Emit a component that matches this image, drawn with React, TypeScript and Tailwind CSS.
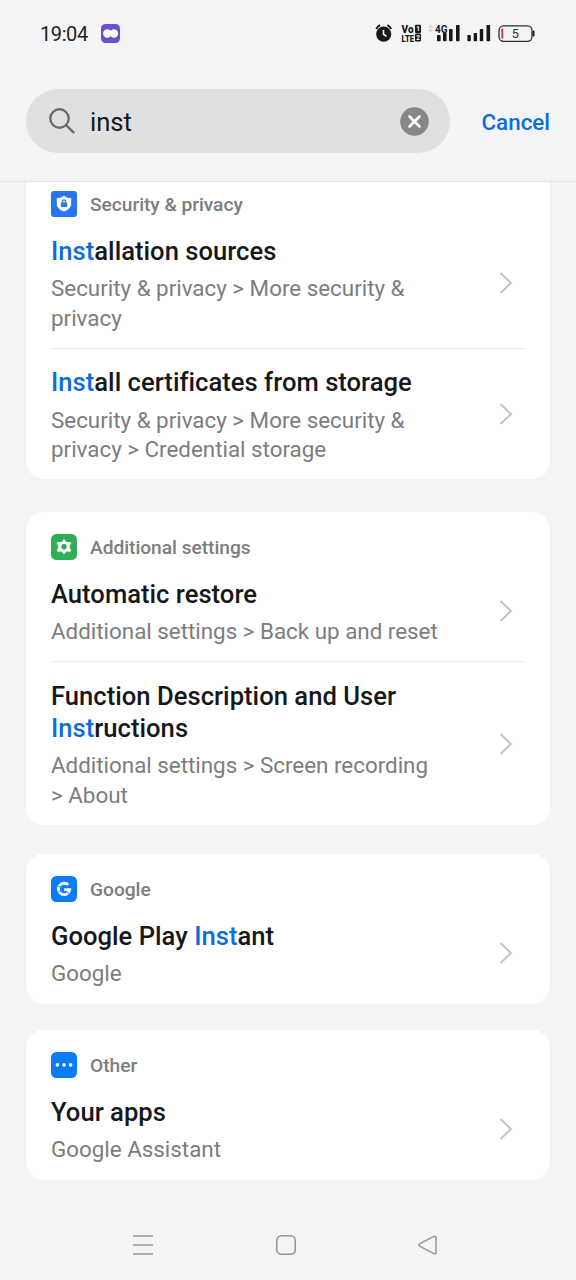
import type { ReactNode } from "react"

type Result = {
  title: ReactNode
  path: ReactNode
}

function Hit({ children }: { children: ReactNode }) {
  return <span className="text-[#0d6ddb]">{children}</span>
}

function ShieldIcon() {
  return (
    <svg viewBox="0 0 26 26" className="size-[26px] shrink-0">
      <rect width="26" height="26" rx="3" fill="#2a75f0" />
      <path d="M13 4.800c2.200 1.500 4.500 2.200 7.200 2.400v5.200c0 4-3.200 6.600-7.200 8-4-1.400-7.200-4-7.200-8V7.200C8.500 7 10.800 6.300 13 4.800z" fill="#fff" />
      <rect x="9.900" y="11.500" width="6.200" height="4.600" rx=".8" fill="#2a75f0" />
      <path d="M11.400 12v-1.600a1.600 1.600 0 0 1 3.200 0V12" fill="none" stroke="#2a75f0" strokeWidth="1.300" />
    </svg>
  )
}

function GearIcon() {
  return (
    <svg viewBox="0 0 26 26" className="size-[26px] shrink-0">
      <rect width="26" height="26" rx="5.500" fill="#2fae55" />
      <path
        d="M13 5.600l2.300 3 3.900-.2c.4 0 .5.300.4.600L18.100 12.800l1.500 3.800c.1.300 0 .6-.4.600l-3.900-.2-2.300 3-2.300-3-3.900.2c-.4 0-.5-.3-.4-.6l1.500-3.800L6.400 9c-.1-.3 0-.6.400-.6l3.900.2z"
        fill="#fff"
        stroke="#fff"
        strokeWidth="1"
        strokeLinejoin="round"
      />
      <circle cx="13" cy="12.800" r="2.700" fill="#2fae55" />
    </svg>
  )
}

function GoogleIcon() {
  return (
    <svg viewBox="0 0 26 26" className="size-[26px] shrink-0">
      <rect width="26" height="26" rx="5.500" fill="#0a7bfa" />
      <path d="M17.200 9A5.700 5.700 0 1 0 18.700 13.600H13.200" fill="none" stroke="#fff" strokeWidth="2.900" />
      <path d="M6.200 9l3 2M6.200 17l3-2M15.800 16l2.600 2" stroke="#0a7bfa" strokeWidth=".8" />
    </svg>
  )
}

function DotsIcon() {
  return (
    <svg viewBox="0 0 26 26" className="size-[26px] shrink-0">
      <rect width="26" height="26" rx="5.500" fill="#0a7bfa" />
      <g fill="#fff">
        <circle cx="6.400" cy="12.900" r="1.800" />
        <circle cx="13" cy="12.900" r="1.800" />
        <circle cx="19.600" cy="12.900" r="1.800" />
      </g>
    </svg>
  )
}

function StatusBar() {
  return (
    <div className="flex h-[68px] items-center pl-10 pr-[40px]">
      <span className="w-[61px] text-[20px] tracking-[-0.400px] text-[#1f2123]">19:04</span>
      <svg viewBox="0 0 19 19" className="mb-px size-[19px]">
        <rect width="19" height="19" rx="4.500" fill="#6b4fd0" />
        <circle cx="6.300" cy="9.500" r="4.200" fill="#fff" />
        <circle cx="12.900" cy="9.500" r="4.200" fill="#fff" />
      </svg>
      <svg viewBox="0 0 162 24" className="ml-auto h-6 w-[162px]" fontFamily="Roboto, sans-serif">
        <g fill="#16181a">
          <circle cx="9.700" cy="12.100" r="7.600" />
          <path d="M2.200 7A9 9 0 0 1 6 3.100M13.400 3.100A9 9 0 0 1 17.200 7" fill="none" stroke="#16181a" strokeWidth="1.800" />
          <path d="M9.500 8.100v4.300l3 1.800" fill="none" stroke="#fff" strokeWidth="1.600" />
          <text x="27.500" y="10.500" fontSize="10" fontWeight="900" textLength="12" lengthAdjust="spacingAndGlyphs">Vo</text>
          <text x="27.500" y="19.500" fontSize="9.500" fontWeight="900" textLength="12.500" lengthAdjust="spacingAndGlyphs">LTE</text>
          <rect x="41" y="2.700" width="6" height="8.300" rx="1" />
          <rect x="41" y="11.600" width="6" height="8" rx="1" />
          <text x="61" y="10.500" fontSize="11.500" fontWeight="700" textLength="12.500" lengthAdjust="spacingAndGlyphs">4G</text>
          <rect x="63" y="13" width="3.600" height="6.200" rx=".8" />
          <rect x="69" y="11" width="3.600" height="8.200" rx=".8" />
          <rect x="75" y="7" width="3.600" height="12.200" rx=".8" />
          <rect x="82" y="3" width="3.600" height="16.200" rx=".8" />
          <rect x="93.400" y="13" width="3.400" height="6.200" rx=".8" />
          <rect x="99.700" y="11" width="3.400" height="8.200" rx=".8" />
          <rect x="105.800" y="7" width="3.400" height="12.200" rx=".8" />
          <rect x="112.500" y="3" width="3.600" height="16.200" rx=".8" />
          <rect x="158.500" y="8.500" width="2" height="6" rx="1" />
        </g>
        <text x="42.300" y="9.300" fontSize="6.500" fontWeight="700" fill="#fff">1</text>
        <text x="42.200" y="18.100" fontSize="6.500" fontWeight="700" fill="#fff">2</text>
        <path d="M54 5.500l2.500-3 2.500 3zM54 7.500l2.500 3 2.500-3z" fill="#cfd1d3" />
        <rect x="125" y="3.900" width="33" height="15.400" rx="4.500" fill="none" stroke="#2b2d2f" strokeWidth="1.300" />
        <rect x="127.300" y="6.300" width="2" height="10.500" rx=".8" fill="#d9434b" />
        <text x="141.300" y="16" fontSize="12.500" textAnchor="middle" fill="#2b2d2f">5</text>
      </svg>
    </div>
  )
}

function SearchBar() {
  return (
    <div className="flex items-center pl-[26px] pt-[21px]">
      <div className="flex h-16 w-[424px] items-center rounded-full bg-[#dfe0e2] pl-[23px] pr-[21px]">
        <svg viewBox="0 0 26 26" className="size-[26px]" fill="none" stroke="#6a6b6d" strokeWidth="2.400" strokeLinecap="round">
          <circle cx="10.500" cy="10.500" r="9.200" />
          <path d="M17.300 17.300l7.200 7" />
        </svg>
        <span className="ml-[15px] flex-1 pt-0.5 text-[25.600px] text-[#17181a]">inst</span>
        <svg viewBox="0 0 29 29" className="size-[29px]">
          <circle cx="14.500" cy="14.500" r="14.300" fill="#858688" />
          <path d="M9.500 9.500l10 10M19.500 9.500l-10 10" stroke="#fff" strokeWidth="2.600" strokeLinecap="round" />
        </svg>
      </div>
      <span className="ml-[31.500px] pt-[3px] text-[22.400px] font-medium text-[#0d6ddb]">Cancel</span>
    </div>
  )
}

function ResultRow({ title, path }: Result) {
  return (
    <div className="flex items-center justify-between pt-[17.400px] pb-[14.600px]">
      <div>
        <div className="text-[25.600px] leading-8 font-medium tracking-[0.020px] whitespace-nowrap text-[#17181a]">{title}</div>
        <div className="mt-[7.500px] text-[22.400px] leading-[29.500px] tracking-[-0.010px] whitespace-nowrap text-[#7c7d7e]">{path}</div>
      </div>
      <svg viewBox="0 0 14 24" className="mt-[-18px] mr-[12.500px] mb-[-15px] h-6 w-3.5 shrink-0" fill="none" stroke="#c4c4c5" strokeWidth="2">
        <path d="M1.500 2l10.500 10-10.500 10" />
      </svg>
    </div>
  )
}

function ResultCard({ icon, name, rows, className }: { icon: ReactNode; name: string; rows: Result[]; className: string }) {
  return (
    <section className={`mx-[26px] bg-white px-[25px] ${className}`}>
      <div className="flex h-[26.500px] items-start gap-[13px]">
        {icon}
        <span className="pt-[2.400px] text-[19.200px] leading-6 font-medium tracking-[-0.040px] text-[#7c7d7e]">{name}</span>
      </div>
      <div className="divide-y divide-[#ededee]">
        {rows.map((row, index) => (
          <ResultRow key={index} {...row} />
        ))}
      </div>
    </section>
  )
}

export default function App() {
  const security: Result[] = [
    {
      title: <><Hit>Inst</Hit>allation sources</>,
      path: <>Security &amp; privacy &gt; More security &amp;<br />privacy</>,
    },
    {
      title: <><Hit>Inst</Hit>all certificates from storage</>,
      path: <>Security &amp; privacy &gt; More security &amp;<br />privacy &gt; Credential storage</>,
    },
  ]

  const additional: Result[] = [
    { title: "Automatic restore", path: "Additional settings > Back up and reset" },
    {
      title: <>Function Description and User<br /><Hit>Inst</Hit>ructions</>,
      path: <>Additional settings &gt; Screen recording<br />&gt; About</>,
    },
  ]

  return (
    <div className="flex h-[1280px] w-[576px] flex-col overflow-hidden bg-[#f3f4f6] font-['Roboto',sans-serif]">
      <header className="h-[182px] shrink-0 border-b border-[#e6e7e9]">
        <StatusBar />
        <SearchBar />
      </header>

      <main className="flex-1">
        <ResultCard className="h-[297px] rounded-b-[18px] pt-[9px]" icon={<ShieldIcon />} name="Security & privacy" rows={security} />
        <ResultCard className="mt-[33px] h-[313px] rounded-[18px] pt-[22px]" icon={<GearIcon />} name="Additional settings" rows={additional} />
        <ResultCard
          className="mt-[29px] h-[150px] rounded-[18px] pt-[22px]"
          icon={<GoogleIcon />}
          name="Google"
          rows={[{ title: <>Google Play <Hit>Inst</Hit>ant</>, path: "Google" }]}
        />
        <ResultCard
          className="mt-[26px] h-[150px] rounded-[18px] pt-[22px]"
          icon={<DotsIcon />}
          name="Other"
          rows={[{ title: "Your apps", path: "Google Assistant" }]}
        />
      </main>

      <nav className="flex h-[70px] shrink-0 items-center justify-between pr-[137px] pl-[132px]">
        <svg viewBox="0 0 22 22" className="size-[22px]" stroke="#97989a" strokeWidth="1.600">
          <path d="M1 2h20M1 11h20M1 20h20" />
        </svg>
        <svg viewBox="0 0 22 22" className="size-[22px]" fill="none" stroke="#97989a" strokeWidth="1.600">
          <rect x="1.800" y="1.800" width="18.400" height="18.400" rx="4.500" />
        </svg>
        <svg viewBox="0 0 22 22" className="size-[22px]" fill="none" stroke="#97989a" strokeWidth="1.500">
          <path d="M2.600 9.800L16.800 2.400c1.200-.6 2.200 0 2.200 1.200v14.800c0 1.200-1 1.800-2.200 1.200L2.600 12.200c-1-.6-1-1.800 0-2.400z" />
        </svg>
      </nav>
    </div>
  )
}
